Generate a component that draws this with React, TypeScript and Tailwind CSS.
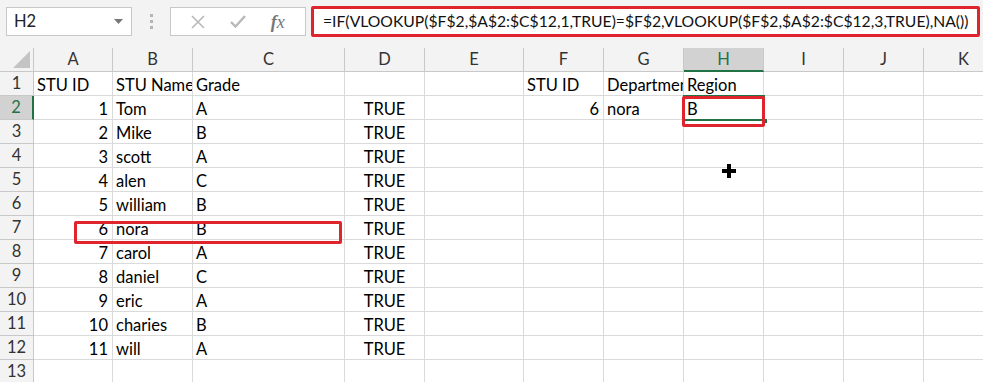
import React from "react";

const FONT = { fontFamily: "Lato, 'Open Sans', sans-serif" };

const COLS = ["A", "B", "C", "D", "E", "F", "G", "H", "I", "J", "K"];

type Row = { a?: string; b?: string; c?: string; d?: string; f?: string; g?: string; h?: string };

const rows: Row[] = [
  { a: "STU ID", b: "STU Name", c: "Grade", f: "STU ID", g: "Departmen", h: "Region" },
  { a: "1", b: "Tom", c: "A", d: "TRUE", f: "6", g: "nora", h: "B" },
  { a: "2", b: "Mike", c: "B", d: "TRUE" },
  { a: "3", b: "scott", c: "A", d: "TRUE" },
  { a: "4", b: "alen", c: "C", d: "TRUE" },
  { a: "5", b: "william", c: "B", d: "TRUE" },
  { a: "6", b: "nora", c: "B", d: "TRUE" },
  { a: "7", b: "carol", c: "A", d: "TRUE" },
  { a: "8", b: "daniel", c: "C", d: "TRUE" },
  { a: "9", b: "eric", c: "A", d: "TRUE" },
  { a: "10", b: "charies", c: "B", d: "TRUE" },
  { a: "11", b: "will", c: "A", d: "TRUE" },
  {},
];

const isNum = (v?: string) => !!v && /^\d+$/.test(v);

function Cell({ v, center }: { v?: string; center?: boolean }) {
  return (
    <div
      className={
        "h-[24px] border-r border-b border-[#dadada] overflow-hidden whitespace-nowrap flex items-center pt-[3px] text-black " +
        (center ? "justify-center" : isNum(v) ? "justify-end pr-[4px]" : "justify-start pl-[3px]")
      }
    >
      {v}
    </div>
  );
}

export default function App() {
  return (
    <div className="w-[983px] h-[382px] overflow-hidden bg-white relative text-[16.5px]" style={FONT}>
      {/* formula bar */}
      <div className="h-[48px] bg-[#f3f3f3] flex items-start pt-[7px] pl-[6px]">
        <div className="w-[126px] h-[29px] bg-white border border-[#c8c8c8] flex items-center justify-between pl-[7px] pr-[8px] text-[#222]">
          <span>H2</span>
          <svg width="9" height="5" viewBox="0 0 9 5">
            <path d="M0 0h9L4.5 5z" fill="#777" />
          </svg>
        </div>
        <div className="w-[38px] h-[29px] flex flex-col items-center justify-center gap-[3px]">
          <span className="w-[3px] h-[3px] bg-[#b5b5b5]" />
          <span className="w-[3px] h-[3px] bg-[#b5b5b5]" />
          <span className="w-[3px] h-[3px] bg-[#b5b5b5]" />
        </div>
        <div className="w-[136px] h-[29px] bg-white border border-[#c8c8c8] flex items-center justify-around px-[8px]">
          <svg width="14" height="14" viewBox="0 0 14 14">
            <path d="M1 1l12 12M13 1L1 13" stroke="#b8b8b8" strokeWidth="1.6" />
          </svg>
          <svg width="16" height="13" viewBox="0 0 16 13">
            <path d="M1 7l4.5 4.5L15 1" stroke="#b8b8b8" strokeWidth="2.4" fill="none" />
          </svg>
          <span className="italic text-[#777] text-[18px] leading-none" style={{ fontFamily: "'Liberation Serif', serif" }}>
            <span className="font-bold">f</span>x
          </span>
        </div>
        <div className="ml-[5px] w-[669px] h-[31px] -mt-[1px] bg-white border-[3px] border-[#e0242e] rounded-[2px] flex items-center pl-[9px] text-[15.7px] text-[#111] whitespace-nowrap overflow-hidden">
          =IF(VLOOKUP($F$2,$A$2:$C$12,1,TRUE)=$F$2,VLOOKUP($F$2,$A$2:$C$12,3,TRUE),NA())
        </div>
      </div>

      {/* sheet */}
      <div className="relative">
        <div className="grid grid-cols-[34px_79px_80px_152px_80px_99px_80px_80px_80px_80px_80px_80px]">
          {/* header row */}
          <div className="h-[24px] bg-[#f3f3f3] border-r border-b border-[#c8c8c8] relative overflow-hidden">
            <svg className="absolute right-[3px] bottom-[3px]" width="17" height="17" viewBox="0 0 17 17">
              <path d="M17 0V17H0z" fill="#c4c4c4" />
            </svg>
          </div>
          {COLS.map((c) => (
            <div
              key={c}
              className={
                "h-[24px] flex items-center justify-center border-r " +
                (c === "H"
                  ? "bg-[#d2d2d2] text-[#217346] border-b-2 border-b-[#217346] border-r-[#c8c8c8]"
                  : "bg-[#f3f3f3] text-[#333] border-b border-[#c8c8c8]")
              }
            >
              {c}
            </div>
          ))}

          {rows.map((r, i) => (
            <React.Fragment key={i}>
              <div
                className={
                  "h-[24px] flex items-center justify-center border-b border-[#c8c8c8] " +
                  (i === 1
                    ? "bg-[#d2d2d2] text-[#217346] border-r-2 border-r-[#217346]"
                    : "bg-[#f3f3f3] text-[#333] border-r")
                }
              >
                {i + 1}
              </div>
              <Cell v={r.a} />
              <Cell v={r.b} />
              <Cell v={r.c} />
              <Cell v={r.d} center />
              <Cell />
              <Cell v={r.f} />
              <Cell v={r.g} />
              <Cell v={r.h} />
              <Cell />
              <Cell />
              <Cell />
            </React.Fragment>
          ))}
        </div>

        {/* H2 selection */}
        <div className="absolute left-[683px] top-[47px] w-[82px] h-[26px] border-2 border-[#217346]" />
        <div className="absolute left-[762px] top-[70px] w-[6px] h-[6px] bg-[#217346] border border-white" />

        {/* red highlight boxes */}
        <div className="absolute left-[682px] top-[48px] w-[83px] h-[31px] border-[3px] border-[#e0242e] rounded-[2px]" />
        <div className="absolute left-[74px] top-[173px] w-[268px] h-[23px] border-[3px] border-[#e0242e] rounded-[2px]" />

        {/* cursor */}
        <svg className="absolute left-[722px] top-[116px]" width="14" height="14" viewBox="0 0 14 14">
          <path d="M5 0h4v5h5v4H9v5H5V9H0V5h5z" fill="#000" />
        </svg>
      </div>
    </div>
  );
}
